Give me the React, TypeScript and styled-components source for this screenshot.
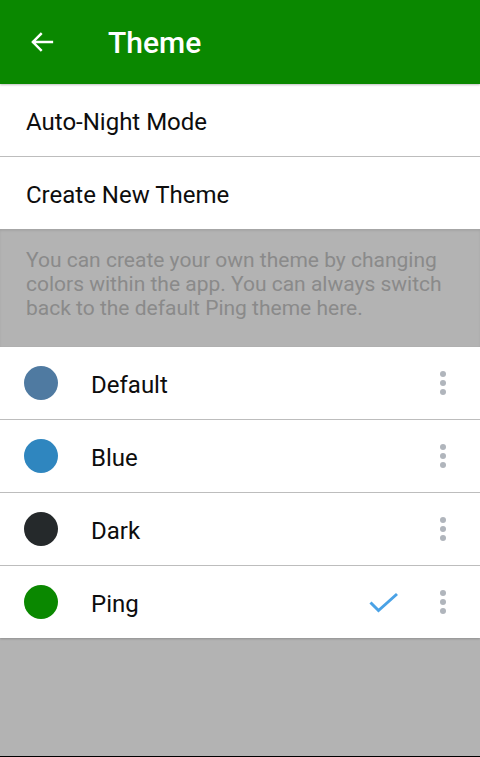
import * as React from "react";
import styled, { createGlobalStyle } from "styled-components";

const GlobalStyle = createGlobalStyle`
  html, body {
    margin: 0;
    padding: 0;
    background: #b3b3b3;
  }
  body {
    font-family: Roboto, "Noto Sans", sans-serif;
  }
`;

const Screen = styled.div`
  width: 480px;
  height: 757px;
  display: flex;
  flex-direction: column;
  background: #b3b3b3;
  border-bottom: 1px solid #000;
  box-sizing: border-box;
  overflow: hidden;
`;

const Toolbar = styled.div`
  height: 84px;
  flex-shrink: 0;
  background: #0a8800;
  display: flex;
  align-items: center;
  box-shadow: 0 1px 2px rgba(0, 0, 0, 0.25);
  position: relative;
  z-index: 1;
`;

const BackButton = styled.div`
  width: 84px;
  height: 84px;
  display: flex;
  align-items: center;
  justify-content: center;
`;

const Title = styled.div`
  margin-left: 24px;
  color: #fff;
  font-size: 30px;
  font-weight: 500;
`;

const Section = styled.div`
  background: #fff;
  display: flex;
  flex-direction: column;
`;

const MenuRow = styled.div`
  height: 72px;
  box-sizing: border-box;
  display: flex;
  align-items: center;
  padding: 3px 0 0 26px;
  font-size: 24px;
  color: #0d0d0d;
  & + & {
    border-top: 1px solid #bdbdbd;
    height: 73px;
  }
`;

const Hint = styled.div`
  padding: 19px 26px 27px;
  font-size: 21px;
  line-height: 24px;
  color: #8a8a8a;
  box-shadow: inset 0 2px 2px rgba(0, 0, 0, 0.08);
`;

const ThemeList = styled(Section)`
  box-shadow: 0 1px 2px rgba(0, 0, 0, 0.2);
`;

const ThemeRow = styled.div`
  height: 72px;
  display: flex;
  align-items: center;
  padding-left: 24px;
  & + & {
    border-top: 1px solid #bdbdbd;
  }
`;

const Swatch = styled.div<{ $color: string }>`
  width: 34px;
  height: 34px;
  border-radius: 50%;
  background: ${(p) => p.$color};
  flex-shrink: 0;
`;

const ThemeName = styled.div`
  margin-left: 33px;
  padding-top: 3px;
  flex: 1;
  font-size: 24px;
  color: #0d0d0d;
`;

const CheckSlot = styled.div`
  width: 30px;
  display: flex;
  justify-content: center;
  margin-right: 31px;
`;

const Kebab = styled.div`
  width: 26px;
  margin-right: 24px;
  display: flex;
  flex-direction: column;
  align-items: center;
  gap: 3px;
  & > span {
    width: 6px;
    height: 6px;
    border-radius: 50%;
    background: #b0b5bc;
  }
`;

const Filler = styled.div`
  flex: 1;
`;

const themes = [
  { name: "Default", color: "#4f7aa1", active: false },
  { name: "Blue", color: "#2f86bf", active: false },
  { name: "Dark", color: "#25292b", active: false },
  { name: "Ping", color: "#0a8800", active: true },
];

const App = () => {
  return (
    <Screen>
      <GlobalStyle />
      <Toolbar>
        <BackButton>
          <svg width="28" height="28" viewBox="0 0 24 24" fill="none">
            <path
              d="M20.5 12H4.5M11 5.2l-6.8 6.8 6.8 6.8"
              stroke="#fff"
              strokeWidth="2.1"
              strokeLinecap="square"
            />
          </svg>
        </BackButton>
        <Title>Theme</Title>
      </Toolbar>
      <Section>
        <MenuRow>Auto-Night Mode</MenuRow>
        <MenuRow>Create New Theme</MenuRow>
      </Section>
      <Hint>
        You can create your own theme by changing colors within the app. You
        can always switch back to the default Ping theme here.
      </Hint>
      <ThemeList>
        {themes.map((t) => (
          <ThemeRow key={t.name}>
            <Swatch $color={t.color} />
            <ThemeName>{t.name}</ThemeName>
            <CheckSlot>
              {t.active && (
                <svg width="30" height="22" viewBox="0 0 30 22" fill="none">
                  <path
                    d="M1.5 11.5l8 8L28 3"
                    stroke="#4aa2e6"
                    strokeWidth="3"
                  />
                </svg>
              )}
            </CheckSlot>
            <Kebab>
              <span />
              <span />
              <span />
            </Kebab>
          </ThemeRow>
        ))}
      </ThemeList>
      <Filler />
    </Screen>
  );
};

export default App;
